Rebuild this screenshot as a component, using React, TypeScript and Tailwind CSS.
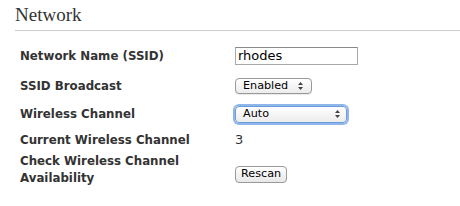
export default function App() {
  const label = "font-bold text-[11.8px] leading-[17px] text-[#333]";
  return (
    <div className="w-[460px] h-[206px] bg-white overflow-hidden" style={{ fontFamily: '"DejaVu Sans", "Liberation Sans", sans-serif' }}>
      <div className="pl-[15px] pt-[3px]">
        <h2 className="text-[19px] leading-[24px] text-[#333] pb-[3px] border-b border-[#cccccc]" style={{ fontFamily: '"Liberation Serif", "DejaVu Serif", serif' }}>
          Network
        </h2>
      </div>
      <div className="pl-[20px] pt-[9px] grid grid-cols-[215px_1fr]">
        <div className={`${label} h-[32px] flex items-center`}>Network Name (SSID)</div>
        <div className="h-[32px] flex items-center">
          <input
            defaultValue="rhodes"
            className="w-[123px] h-[18px] border border-[#a9a9a9] border-t-[#8a8a8a] px-[2px] text-[13px] text-black outline-none"
            style={{ fontFamily: '"DejaVu Sans", sans-serif' }}
          />
        </div>

        <div className={`${label} h-[28px] flex items-center`}>SSID Broadcast</div>
        <div className="h-[28px] flex items-center">
          <div className="w-[77px] h-[16px] rounded-[4px] border border-[#9a9a9a] bg-gradient-to-b from-white to-[#ececec] flex items-center justify-between pl-[7px] pr-[8px] text-[11.2px] text-black shadow-[0_1px_0_rgba(0,0,0,0.08)]">
            <span>Enabled</span>
            <Arrows />
          </div>
        </div>

        <div className={`${label} h-[28px] flex items-center`}>Wireless Channel</div>
        <div className="h-[28px] flex items-center">
          <div className="w-[112px] h-[17px] rounded-[4px] border border-[#6b9bd8] ring-2 ring-[#8fb6e8] bg-gradient-to-b from-white to-[#ececec] flex items-center justify-between pl-[7px] pr-[6px] text-[11.2px] text-black">
            <span>Auto</span>
            <Arrows />
          </div>
        </div>

        <div className={`${label} h-[24px] flex items-center`}>Current Wireless Channel</div>
        <div className="h-[24px] flex items-center text-[13px] text-[#333]">3</div>

        <div className={`${label} pt-[1px]`}>
          Check Wireless Channel
          <br />
          Availability
        </div>
        <div className="pt-[8px]">
          <button className="h-[17px] px-[5px] rounded-[4px] border border-[#9a9a9a] bg-gradient-to-b from-white to-[#e8e8e8] text-[11.2px] leading-[14px] text-black">
            Rescan
          </button>
        </div>
      </div>
    </div>
  );
}

function Arrows() {
  return (
    <svg width="5" height="8" viewBox="0 0 5 8">
      <path d="M2.5 0 L5 3 H0 Z M2.5 8 L5 5 H0 Z" fill="#444" />
    </svg>
  );
}
